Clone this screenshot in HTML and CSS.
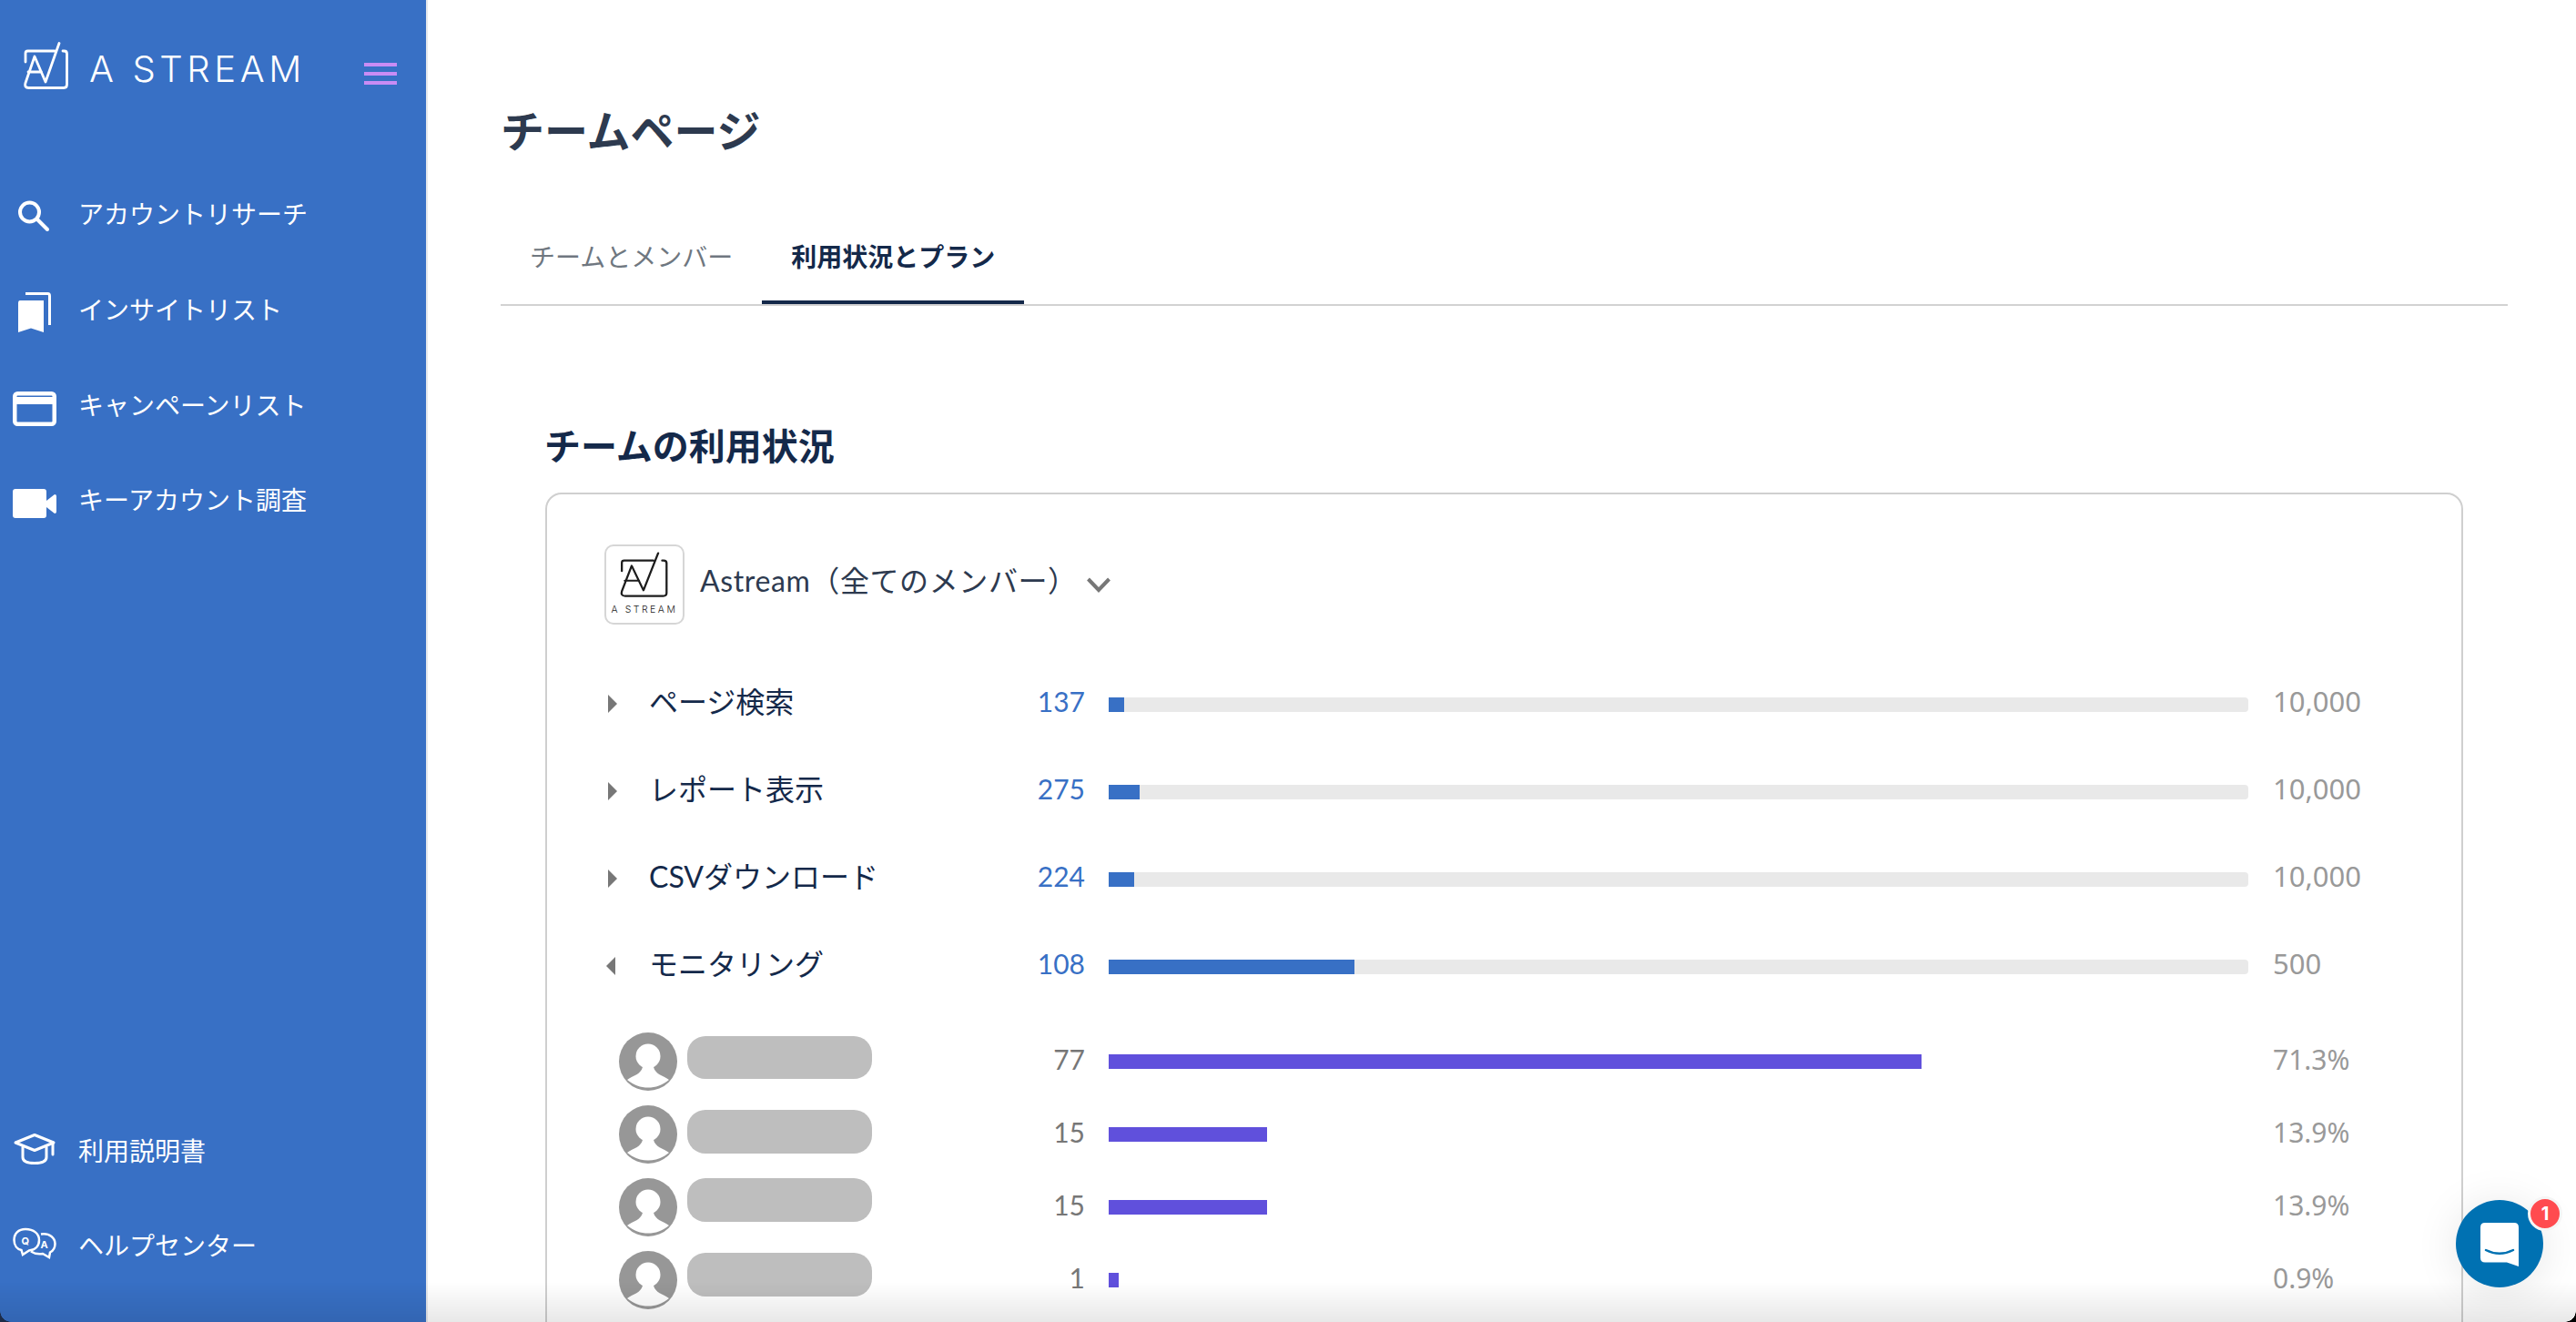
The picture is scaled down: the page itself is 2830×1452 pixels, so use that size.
FILE: index.html
```html
<!DOCTYPE html>
<html lang="ja">
<head>
<meta charset="utf-8">
<title>チームページ</title>
<link rel="stylesheet" href="styles.css">
</head>
<body>
<svg class="defs" width="0" height="0" aria-hidden="true">
  <symbol id="mark" viewBox="26 46 50 54" preserveAspectRatio="none">
    <path class="mark-line" d="M28 68V58.500Q28 56 30.500 56H60M69 56H70.500Q73.500 56 73.500 59V93Q73.500 96.500 70 96.500H31.500Q26.500 96.500 28 91L38 62L50 90L65 47.500M31 79H45.500"/>
  </symbol>
  <symbol id="person" viewBox="0 0 64 64">
    <circle cx="32" cy="32" r="32" fill="#979797"/>
    <circle cx="32" cy="26" r="13.500" fill="#fff"/>
    <path d="M9 52C16 47 24 46 26 38H38C40 46 48 47 55 52C48 58 40 60.500 32 60.500C24 60.500 16 58 9 52Z" fill="#fff"/>
  </symbol>
</svg>
<div class="app">
  <aside class="sidebar">
    <div class="brand">
      <svg class="brand-mark"><use href="#mark"/></svg>
      <span class="brand-name">A STREAM</span>
      <span class="burger"><i></i><i></i><i></i></span>
    </div>
    <nav class="nav">
      <a class="nav-item">
        <span class="nav-icon"><svg width="48" height="48" viewBox="0 0 48 48"><circle cx="18.500" cy="23" r="10.500" fill="none" stroke="#fff" stroke-width="4"/><path d="M27 31L38 42" stroke="#fff" stroke-width="4" stroke-linecap="round"/></svg></span>
        <span>アカウントリサーチ</span>
      </a>
      <a class="nav-item">
        <span class="nav-icon"><svg width="48" height="48" viewBox="0 0 48 48"><path d="M14 7.500H38.500Q40.500 7.500 40.500 10V42" fill="none" stroke="#fff" stroke-width="3"/><path d="M8 15Q6 15 6 18V50L20 45.500L34 50V15Z" fill="#fff"/></svg></span>
        <span>インサイトリスト</span>
      </a>
      <a class="nav-item">
        <span class="nav-icon"><svg width="48" height="48" viewBox="0 0 48 48"><rect x="2.250" y="12.250" width="43.500" height="33.500" rx="3" fill="none" stroke="#fff" stroke-width="4.500"/><rect x="2" y="16" width="44" height="8" fill="#fff"/></svg></span>
        <span>キャンペーンリスト</span>
      </a>
      <a class="nav-item">
        <span class="nav-icon"><svg width="48" height="48" viewBox="0 0 48 48"><rect x="0" y="13" width="37" height="32" rx="3" fill="#fff"/><path d="M37 26L46 19Q48 19 48 21V38Q48 40 46 40L37 33Z" fill="#fff"/></svg></span>
        <span>キーアカウント調査</span>
      </a>
    </nav>
    <div class="nav nav-bottom">
      <a class="nav-item">
        <span class="nav-icon"><svg width="48" height="48" viewBox="0 0 48 48"><path d="M3 16L24 7.500L45 16L24 24.500Z" fill="none" stroke="#fff" stroke-width="3" stroke-linejoin="round"/><path d="M11 21V32Q11 38.500 24 38.500Q37 38.500 37 32V21M44 16V29" fill="none" stroke="#fff" stroke-width="3" stroke-linecap="round"/></svg></span>
        <span>利用説明書</span>
      </a>
      <a class="nav-item">
        <span class="nav-icon"><svg width="48" height="48" viewBox="0 0 48 48"><path d="M14 7C6 7 1.500 12 1.500 19C1.500 25 5 29 9.500 30L11 35L18 30.500C25 30 29 25.500 29 19C29 12 23 7 14 7Z" fill="none" stroke="#fff" stroke-width="2.500"/><path d="M31 12.500C41 11 46.500 17 46.500 23C46.500 28 44 31 41 32.500L40 38L33 34C27 35 23 33.500 20 31.500" fill="none" stroke="#fff" stroke-width="2.500"/><text class="qa" x="9.500" y="24">Q</text><text class="qa" x="30.500" y="28">A</text></svg></span>
        <span>ヘルプセンター</span>
      </a>
    </div>
  </aside>

  <main class="main">
    <h1 class="page-title">チームページ</h1>
    <div class="tabs">
      <a class="tab">チームとメンバー</a>
      <a class="tab tab-active">利用状況とプラン</a>
    </div>
    <section class="usage">
      <h2 class="usage-title">チームの利用状況</h2>
      <div class="card">
        <div class="team">
          <div class="team-logo">
            <svg class="team-mark"><use href="#mark"/></svg>
            <span class="team-logo-name">A STREAM</span>
          </div>
          <span class="team-name">Astream（全てのメンバー）</span>
          <svg class="chevron" width="28" height="18" viewBox="0 0 28 18"><path d="M2.500 3L14 15L25.500 3" fill="none" stroke="#777" stroke-width="4"/></svg>
        </div>

        <div class="row">
          <div class="row-name"><i class="caret"></i><span>ページ検索</span></div>
          <div class="row-num">137</div>
          <div class="track"><div class="fill" style="width:1.37%"></div></div>
          <div class="row-limit">10,000</div>
        </div>
        <div class="row">
          <div class="row-name"><i class="caret"></i><span>レポート表示</span></div>
          <div class="row-num">275</div>
          <div class="track"><div class="fill" style="width:2.75%"></div></div>
          <div class="row-limit">10,000</div>
        </div>
        <div class="row">
          <div class="row-name"><i class="caret"></i><span>CSVダウンロード</span></div>
          <div class="row-num">224</div>
          <div class="track"><div class="fill" style="width:2.24%"></div></div>
          <div class="row-limit">10,000</div>
        </div>
        <div class="row">
          <div class="row-name"><i class="caret caret-open"></i><span>モニタリング</span></div>
          <div class="row-num">108</div>
          <div class="track"><div class="fill" style="width:21.6%"></div></div>
          <div class="row-limit">500</div>
        </div>

        <div class="members">
          <div class="row member">
            <div class="member-who"><svg class="member-pic"><use href="#person"/></svg><span class="pill pill-a"></span></div>
            <div class="row-num member-num">77</div>
            <div class="member-bar"><div class="fill fill-member" style="width:71.3%"></div></div>
            <div class="row-limit member-share">71.3%</div>
          </div>
          <div class="row member">
            <div class="member-who"><svg class="member-pic"><use href="#person"/></svg><span class="pill pill-b"></span></div>
            <div class="row-num member-num">15</div>
            <div class="member-bar"><div class="fill fill-member" style="width:13.9%"></div></div>
            <div class="row-limit member-share">13.9%</div>
          </div>
          <div class="row member">
            <div class="member-who"><svg class="member-pic"><use href="#person"/></svg><span class="pill pill-c"></span></div>
            <div class="row-num member-num">15</div>
            <div class="member-bar"><div class="fill fill-member" style="width:13.9%"></div></div>
            <div class="row-limit member-share">13.9%</div>
          </div>
          <div class="row member">
            <div class="member-who"><svg class="member-pic"><use href="#person"/></svg><span class="pill pill-d"></span></div>
            <div class="row-num member-num">1</div>
            <div class="member-bar"><div class="fill fill-member" style="width:0.9%"></div></div>
            <div class="row-limit member-share">0.9%</div>
          </div>
        </div>
      </div>
    </section>
  </main>
</div>

<div class="edge-shade"></div>
<div class="corner corner-left"></div>
<div class="corner corner-right"></div>
<button class="chat" type="button" aria-label="チャット">
  <svg width="42" height="48" viewBox="0 0 42 48"><path d="M5 0H37Q42 0 42 5V48L29 43.500H5Q0 43.500 0 38.500V5Q0 0 5 0Z" fill="#fff"/><path d="M6 30Q21 37.500 36 30" fill="none" stroke="#0071b2" stroke-width="2.500" stroke-linecap="round"/></svg>
  <span class="chat-badge">1</span>
</button>
</body>
</html>
```

FILE: styles.css
```css
* { box-sizing: border-box; }
html, body { margin: 0; height: 100%; }
body {
  height: 1452px;
  overflow: hidden;
  background: #fff;
  font-family: "Lato", "Noto Sans CJK JP", sans-serif;
  color: #14294a;
}
.defs { position: absolute; }
.app { display: flex; height: 1452px; }
.mark-line {
  fill: none;
  stroke: currentColor;
  stroke-width: var(--mark-stroke, 2.800px);
  stroke-linecap: round;
  stroke-linejoin: round;
}

/* Sidebar */
.sidebar {
  flex: 0 0 470px;
  height: 1452px;
  display: flex;
  flex-direction: column;
  background: #3870c5;
  border-right: 2px solid #e6e8ec;
  color: #fff;
}
.brand {
  display: flex;
  align-items: center;
  height: 54px;
  margin-top: 46px;
  padding-left: 26px;
}
.brand-mark { width: 50px; height: 54px; color: #fff; flex: none; }
.brand-name {
  margin: 4px 0 0 22px;
  width: 302px;
  font-family: "Inter", sans-serif;
  font-weight: 300;
  font-size: 40px;
  letter-spacing: 4.600px;
  white-space: nowrap;
}
.burger {
  display: flex;
  flex-direction: column;
  gap: 6px;
  width: 36px;
  margin-top: 16px;
}
.burger i { display: block; height: 4px; background: #c98cf5; }

.nav { display: flex; flex-direction: column; }
.nav:not(.nav-bottom) { margin-top: 82px; }
.nav-bottom { margin-top: auto; margin-bottom: 33px; }
.nav-item {
  display: flex;
  align-items: center;
  height: 104.700px;
  padding-left: 14px;
  font-family: "Noto Sans CJK JP", sans-serif;
  font-size: 28px;
  color: #fff;
  white-space: nowrap;
}
.nav-bottom .nav-item { height: 104px; }
.nav-icon { flex: none; width: 48px; height: 48px; margin-right: 24px; display: block; }
.nav-icon svg { display: block; overflow: visible; }
.qa { font-family: "Inter", sans-serif; font-size: 11px; font-weight: 700; fill: #fff; }

/* Main */
.main { flex: 1; padding: 111px 75px 0 80px; min-width: 0; }
.page-title {
  margin: 0 0 63px;
  font-family: "Noto Sans CJK JP", sans-serif;
  font-size: 48px;
  line-height: 60px;
  font-weight: 700;
  color: #2d3a4f;
}
.tabs { display: flex; border-bottom: 2px solid #d2d2d2; }
.tab {
  padding: 27px 32px 29px;
  height: 100px;
  font-family: "Noto Sans CJK JP", sans-serif;
  font-size: 28px;
  line-height: 40px;
  color: #6f7780;
}
.tab-active { font-weight: 700; color: #14294a; border-bottom: 4px solid #14294a; }

.usage { padding: 124px 49px 0; }
.usage-title {
  margin: 0 0 25px -1px;
  font-family: "Noto Sans CJK JP", sans-serif;
  font-size: 40px;
  line-height: 56px;
  font-weight: 700;
  color: #14294a;
}
.card {
  border: 2px solid #cfcfcf;
  border-radius: 18px;
  padding: 55px 0 200px 63px;
}
.team { display: flex; align-items: center; margin-bottom: 36px; }
.team-logo {
  flex: none;
  width: 88px;
  height: 88px;
  border: 2px solid #d6d6d6;
  border-radius: 10px;
  display: flex;
  flex-direction: column;
  align-items: center;
  padding-top: 6px;
  color: #1c1c1c;
  --mark-stroke: 2.100px;
}
.team-mark { width: 54px; height: 52px; flex: none; }
.team-logo-name {
  margin-top: 5px;
  font-family: "Inter", sans-serif;
  font-weight: 300;
  font-size: 10.500px;
  line-height: 14px;
  letter-spacing: 2.500px;
  white-space: nowrap;
}
.team-name {
  margin: 0 0 8px 17px;
  font-size: 32px;
  line-height: 44px;
  letter-spacing: .6px;
  font-family: "Lato", "Noto Sans CJK JP", sans-serif;
  color: #2d3a4f;
  white-space: nowrap;
}
.chevron { margin: 0 0 0 9px; }

.row {
  display: grid;
  grid-template-columns: 466px 88px 1252px 1fr;
  align-items: center;
  height: 96px;
}
.row-name {
  display: flex;
  align-items: center;
  margin-top: -2px;
  font-family: "Lato", "Noto Sans CJK JP", sans-serif;
  font-size: 32px;
  color: #14294a;
  white-space: nowrap;
}
.caret {
  flex: none;
  width: 0;
  height: 0;
  margin: 8px 35px 0 4px;
  border-style: solid;
  border-width: 10px 0 10px 10px;
  border-color: transparent transparent transparent #777;
}
.caret-open {
  margin: 8px 37px 0 2px;
  border-width: 10px 10px 10px 0;
  border-color: transparent #777 transparent transparent;
}
.row-num {
  padding-right: 26px;
  text-align: right;
  font-size: 30px;
  color: #3870c5;
}
.track {
  height: 16px;
  margin-top: 8px;
  background: #e9e9e9;
  border-radius: 0 4px 4px 0;
}
.fill { height: 16px; background: #3870c5; }
.row-limit {
  padding-left: 27px;
  font-family: "Noto Sans", sans-serif;
  font-size: 31px;
  color: #999;
}
.member-share { font-size: 30px; }

.members { margin-top: 17px; }
.member { height: 80px; }
.member-who { display: flex; align-self: start; padding-left: 16px; }
.member-pic { width: 64px; height: 64px; margin-top: 11px; flex: none; }
.pill { display: block; width: 203px; background: #bebebe; border-radius: 20px; margin-left: 11px; }
.pill-a { height: 47px; margin-top: 15px; }
.pill-b { height: 48px; margin-top: 16px; }
.pill-c { height: 48px; margin-top: 11px; }
.pill-d { height: 48px; margin-top: 13px; }
.member-num { color: #777; }
.member-bar { margin-top: 6px; }
.fill-member { background: #6050dc; }

/* Overlays */
.edge-shade {
  position: fixed;
  left: 0;
  right: 0;
  bottom: 0;
  height: 44px;
  pointer-events: none;
  background: linear-gradient(to bottom, rgba(0,0,0,0), rgba(0,0,0,.09));
}
.corner { position: fixed; bottom: 0; width: 12px; height: 12px; pointer-events: none; }
.corner-left { left: 0; background: radial-gradient(circle at 100% 0, transparent 11.500px, #1d2c48 12px); }
.corner-right { right: 0; background: radial-gradient(circle at 0 0, transparent 11.500px, #000 12px); }
.chat {
  position: fixed;
  left: 2698px;
  top: 1318px;
  width: 96px;
  height: 96px;
  padding: 0;
  border: 0;
  border-radius: 50%;
  background: #0071b2;
  box-shadow: 0 4px 48px rgba(0,0,0,.1);
  display: flex;
  align-items: center;
  justify-content: center;
}
.chat svg { margin-top: 2px; }
.chat-badge {
  position: absolute;
  left: 79px;
  top: -4px;
  width: 38px;
  height: 38px;
  border: 3px solid #f5f5f5;
  border-radius: 50%;
  background: #ff4b4f;
  color: #fff;
  font-family: "Inter", sans-serif;
  font-weight: 700;
  font-size: 20px;
  line-height: 32px;
  text-align: center;
}
```
